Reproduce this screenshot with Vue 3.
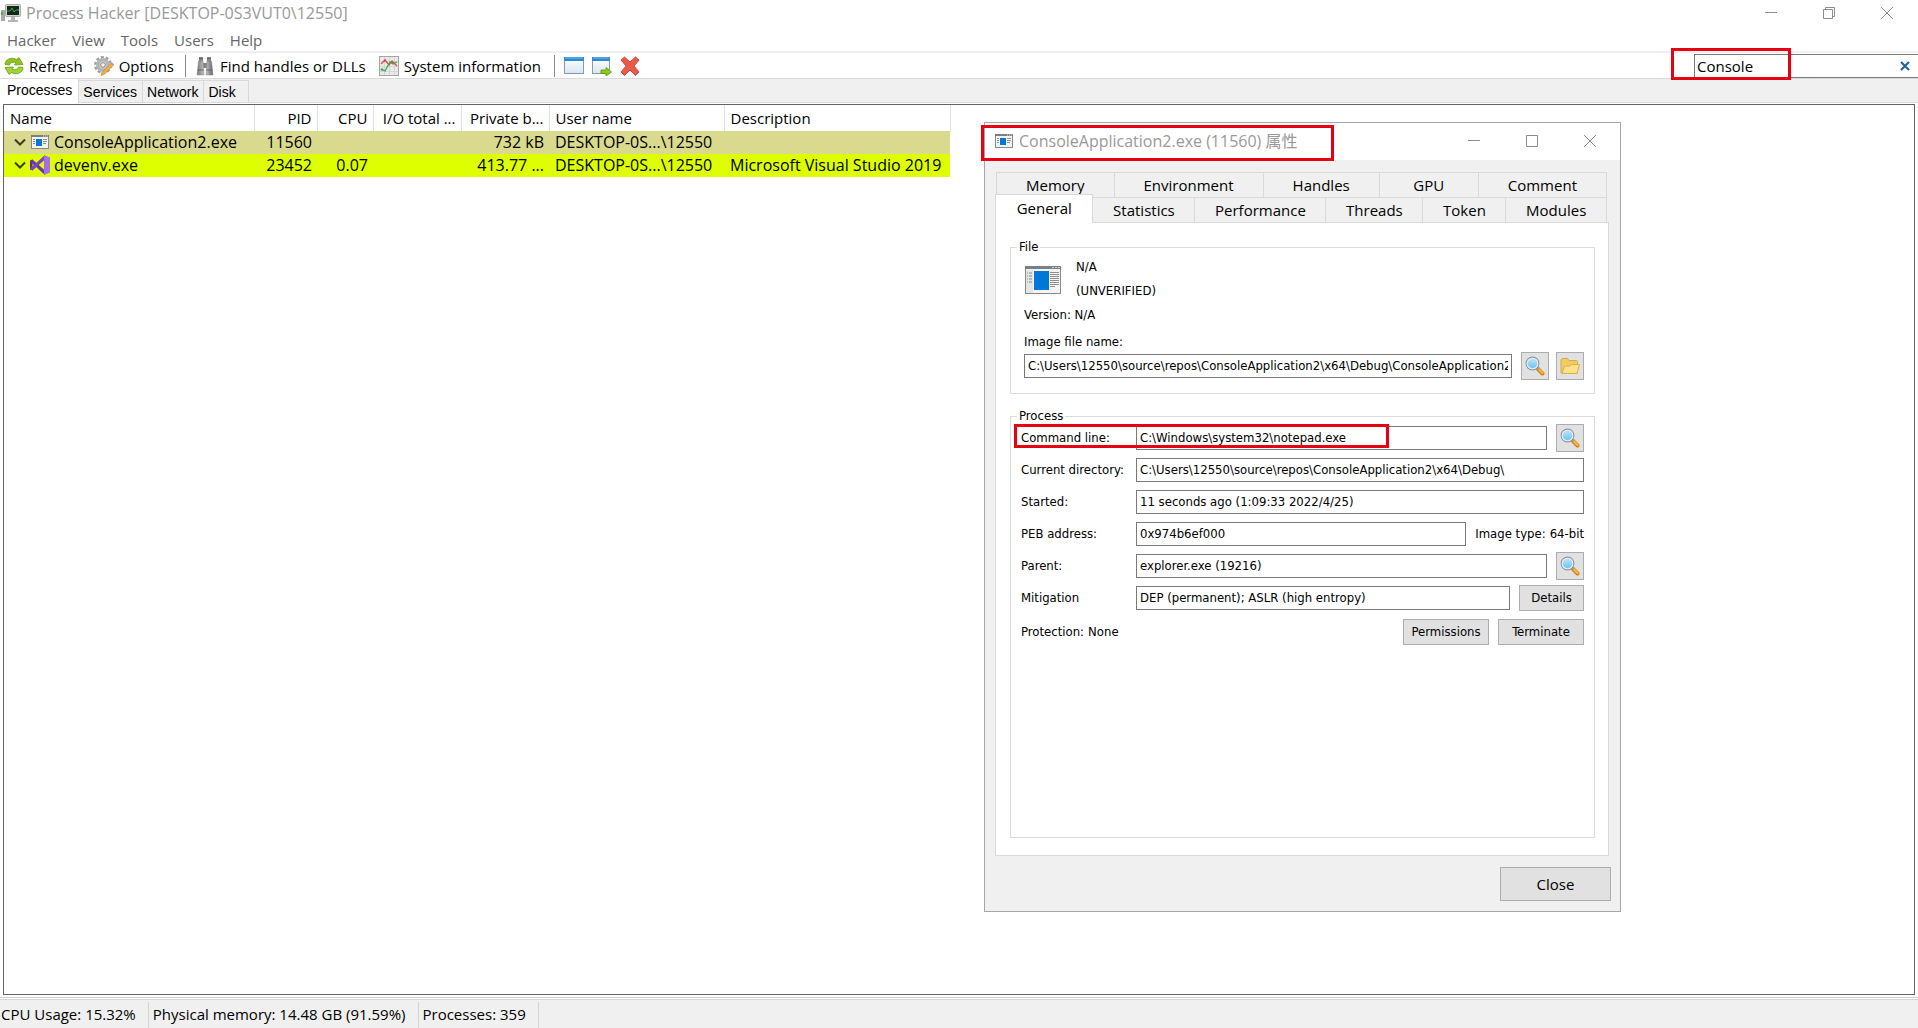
<script setup>
import { ref } from 'vue'

const menus = ['Hacker', 'View', 'Tools', 'Users', 'Help']
const mainTabs = ['Processes', 'Services', 'Network', 'Disk']
const filter = ref('Console')

const columns = [
  { key: 'name', label: 'Name' },
  { key: 'pid', label: 'PID', right: true },
  { key: 'cpu', label: 'CPU', right: true },
  { key: 'io', label: 'I/O total ...', right: true },
  { key: 'priv', label: 'Private b...', right: true },
  { key: 'user', label: 'User name' },
  { key: 'desc', label: 'Description' }
]

const processes = [
  { name: 'ConsoleApplication2.exe', icon: 'console', tone: 'selected', pid: '11560', cpu: '', io: '', priv: '732 kB', user: 'DESKTOP-0S...\\12550', desc: '' },
  { name: 'devenv.exe', icon: 'vs', tone: 'own', pid: '23452', cpu: '0.07', io: '', priv: '413.77 ...', user: 'DESKTOP-0S...\\12550', desc: 'Microsoft Visual Studio 2019' }
]

const status = ['CPU Usage: 15.32%', 'Physical memory: 14.48 GB (91.59%)', 'Processes: 359']

const backTabs = ['Memory', 'Environment', 'Handles', 'GPU', 'Comment']
const frontTabs = ['General', 'Statistics', 'Performance', 'Threads', 'Token', 'Modules']

const imageFile = ref('C:\\Users\\12550\\source\\repos\\ConsoleApplication2\\x64\\Debug\\ConsoleApplication2.exe')
const commandLine = ref('C:\\Windows\\system32\\notepad.exe')
const currentDir = ref('C:\\Users\\12550\\source\\repos\\ConsoleApplication2\\x64\\Debug\\')
const started = ref('11 seconds ago (1:09:33 2022/4/25)')
const peb = ref('0x974b6ef000')
const parent = ref('explorer.exe (19216)')
const mitigation = ref('DEP (permanent); ASLR (high entropy)')
</script>

<template>
  <div class="window">
    <!-- Shared icon shapes -->
    <svg class="defs" aria-hidden="true">
      <defs>
        <linearGradient id="lens" x1="0" y1="0" x2="0" y2="1">
          <stop offset="0" stop-color="#c4eafc" /><stop offset="1" stop-color="#62bdf0" />
        </linearGradient>
        <linearGradient id="pane" x1="0" y1="0" x2="0" y2="1">
          <stop offset="0" stop-color="#ffffff" /><stop offset="1" stop-color="#dbe5f0" />
        </linearGradient>
        <linearGradient id="metal" x1="0" y1="0" x2="1" y2="0">
          <stop offset="0" stop-color="#777" /><stop offset=".5" stop-color="#ccc" /><stop offset="1" stop-color="#666" />
        </linearGradient>
        <symbol id="i-console" viewBox="0 0 36 28">
          <rect x=".5" y=".5" width="35" height="27" fill="#f4f4f4" stroke="#85888c" />
          <path d="M0 0h36v3H0z" fill="#7c8084" />
          <path d="M1 4h7v23H1z" fill="#e6e6e6" />
          <path d="M27 1.5h2M30 1.5h2M33 1.5h2" stroke="#d5d5d5" />
          <path d="M2 7h1M4 7h3M2 10h1M4 10h3M2 13h1M4 13h3M2 16h1M4 16h3" stroke="#8a8a8a" />
          <path d="M9 5h15v19H9z" fill="#0078d7" />
          <path d="M25 6.500h9M25 8.500h9M25 10.500h9M25 12.500h9M25 14.500h9M25 16.500h9M25 18.500h9M25 20.500h5" stroke="#8f8f8f" />
        </symbol>
        <symbol id="i-console-small" viewBox="0 0 18 14">
          <rect x=".5" y=".5" width="17" height="13" fill="#f4f4f4" stroke="#85888c" />
          <path d="M0 0h18v2H0z" fill="#7c8084" />
          <path d="M12 1h1M14 1h1M16 1h1" stroke="#ddd" />
          <path d="M2 4.500h2M2 6.500h2M2 8.500h2M12 4.500h4M12 6.500h4M12 8.500h3" stroke="#8f8f8f" />
          <path d="M5 4h6v7H5z" fill="#0078d7" />
        </symbol>
        <symbol id="i-vs" viewBox="0 0 20 20">
          <path d="M0 5.500 2.500 4.500v11L0 14.500z" fill="#5b2d91" />
          <path d="M2.500 4.500 15 15.500V20L0 6.500z" fill="#6a35a8" />
          <path d="M2.500 15.500 15 4.500V0L0 13.500z" fill="#7c43bd" />
          <path d="M14 0l6 2.600v14.800L14 20z" fill="#a56fea" />
        </symbol>
        <symbol id="i-search" viewBox="0 0 20 20">
          <path d="M12.500 12.500l5 5" stroke="#d87d12" stroke-width="4" stroke-linecap="round" />
          <path d="M13 12.500l4.500 4.500" stroke="#fcb93a" stroke-width="2.200" stroke-linecap="round" />
          <path d="M11 11l2.500 2.500" stroke="#999" stroke-width="2" />
          <circle cx="7.500" cy="7.500" r="6.300" fill="url(#lens)" stroke="#8b96a0" stroke-width="1.200" />
          <circle cx="7.500" cy="7.500" r="5.300" fill="none" stroke="#e6edf2" stroke-width="1.100" />
        </symbol>
      </defs>
    </svg>

    <header class="titlebar">
      <svg class="app-icon" viewBox="0 0 20 18">
        <path d="M0 6h4v11H0z" fill="#a9a9a9" /><path d="M1 8v3" stroke="#35b535" stroke-width="1.500" />
        <rect x="4.500" y=".5" width="15" height="12" rx="1" fill="#d2d2d2" stroke="#aaa" />
        <path d="M6 2h12v9H6z" fill="#17261b" />
        <path d="M6 7h3l2-3 2 4 2-2h3" fill="none" stroke="#35a943" />
        <path d="M10 13h4v3h-4zM7 16h10v2H7z" fill="#b6b6b6" />
      </svg>
      <h1>Process Hacker [DESKTOP-0S3VUT0\12550]</h1>
      <div class="controls">
        <button aria-label="Minimize"><svg viewBox="0 0 12 12"><path d="M0 5.500h12" /></svg></button>
        <button aria-label="Restore"><svg viewBox="0 0 12 12"><path d="M.5 2.500h9v9h-9zM2.500 2.500v-2h9v9h-2" /></svg></button>
        <button aria-label="Close"><svg viewBox="0 0 12 12"><path d="M0 0l12 12M12 0L0 12" /></svg></button>
      </div>
    </header>

    <nav class="menubar">
      <a v-for="m in menus" :key="m" href="#">{{ m }}</a>
    </nav>

    <div class="toolbar">
      <button class="tool">
        <svg viewBox="0 0 20 20">
          <path d="M1 8.500C1 3 8 .5 12.500 3.500L15 1.500l4 7-8.500.5L12 7C9 5.500 6.500 6.500 5.500 9z" fill="#8fc31f" stroke="#6a9a12" stroke-width=".8" />
          <path d="M19 11.500c0 5.500-7 8-11.500 5L5 18.500l-4-7 8.500-.5L8 13c3 1.500 5.500.5 6.500-2z" fill="#a3d335" stroke="#6a9a12" stroke-width=".8" />
        </svg>
        <span>Refresh</span>
      </button>
      <button class="tool">
        <svg viewBox="0 0 20 20">
          <circle cx="9" cy="9" r="7.700" fill="none" stroke="#a2a2a2" stroke-width="2.600" stroke-dasharray="3 1.840" />
          <circle cx="9" cy="9" r="5.200" fill="#d6d6d6" stroke="#b4b4b4" stroke-width="3.400" />
          <circle cx="9" cy="9" r="2.300" fill="#f5f5f5" stroke="#888" />
          <path d="M17 7.500l2 2-9 9-3 1 1-3z" fill="#f7b040" stroke="#c98420" stroke-width=".7" />
          <path d="M17 7.500l1-1 2 2-1 1z" fill="#c77ba8" />
        </svg>
        <span>Options</span>
      </button>
      <i class="rule"></i>
      <button class="tool wide">
        <svg viewBox="0 0 20 20">
          <path d="M4 1h4v5H4zM12 1h4v5h-4zM8 7h4v5H8z" fill="#858585" />
          <path d="M3.500 5H8l1 14H2zM12 5h4.500L18 19h-7z" fill="url(#metal)" stroke="#888" stroke-width=".5" />
          <path d="M2.500 14h6M11.500 14h6M4 2.500h4M12 2.500h4" stroke="#666" />
        </svg>
        <span>Find handles or DLLs</span>
      </button>
      <button class="tool wide">
        <svg viewBox="0 0 20 20">
          <rect x=".5" y=".5" width="19" height="19" fill="#eaeaea" stroke="#a5a5a5" />
          <path d="M1 5.500h18M1 10.500h18M1 15.500h18M5.500 1v18M10.500 1v18M15.500 1v18" stroke="#cfcfcf" stroke-width=".7" />
          <path d="M2 8l4-4 4 5 3-4 5 5" fill="none" stroke="#dd4b4b" stroke-width="1.300" />
          <path d="M3 13.500l3 1.500 5-9 3 2 4-2" fill="none" stroke="#3fa648" stroke-width="1.300" />
          <circle cx="3" cy="13.500" r="1.300" fill="#3fa648" /><circle cx="6" cy="4.500" r="1.200" fill="#dd4b4b" />
        </svg>
        <span>System information</span>
      </button>
      <i class="rule"></i>
      <div class="icon-tools">
        <button class="tool" aria-label="Find window">
          <svg viewBox="0 0 20 20">
            <rect x=".5" y="1.500" width="19" height="16" fill="url(#pane)" stroke="#7e9dba" />
            <path d="M0 1h20v4H0z" fill="#2c8bd0" /><path d="M1 2h18" stroke="#6dbbeb" />
          </svg>
        </button>
        <button class="tool" aria-label="Find window and thread">
          <svg viewBox="0 0 20 20">
            <rect x=".5" y="1.500" width="17" height="16" fill="url(#pane)" stroke="#7e9dba" />
            <path d="M0 1h18v4H0z" fill="#2c8bd0" /><path d="M1 2h16" stroke="#6dbbeb" />
            <path d="M9 14h5v-2.500l5.500 4.500-5.500 4v-2.500H9z" fill="#8ecb1c" stroke="#5d9110" stroke-width=".8" />
          </svg>
        </button>
        <button class="tool" aria-label="Find window and kill">
          <svg viewBox="0 0 20 20">
            <path d="M1 4l3.500-3L10 6l5.500-5L19 4l-5 6 5 6-3.500 3.500L10 14l-5.500 5.500L1 16l5-6z" fill="#ec5a47" stroke="#c9493a" />
          </svg>
        </button>
      </div>
      <div class="search">
        <input v-model="filter" type="text" aria-label="Search processes" />
        <button aria-label="Clear search">
          <svg viewBox="0 0 10 10"><path d="M1 1l8 8M9 1L1 9" /></svg>
        </button>
        <i class="mark mark-search"></i>
      </div>
    </div>

    <div class="tabs" role="tablist">
      <button v-for="(t, i) in mainTabs" :key="t" role="tab" :class="{ active: i === 0 }">{{ t }}</button>
    </div>

    <main class="page">
      <div class="list">
        <table>
          <colgroup>
            <col v-for="c in columns" :key="c.key" :class="'col-' + c.key" />
          </colgroup>
          <thead>
            <tr>
              <th v-for="c in columns" :key="c.key" :class="{ right: c.right }">{{ c.label }}</th>
            </tr>
          </thead>
          <tbody>
            <tr v-for="p in processes" :key="p.pid" :class="p.tone">
              <td>
                <div class="name">
                  <svg class="chevron" viewBox="0 0 12 8"><path d="M1 1.500l5 5 5-5" /></svg>
                  <svg v-if="p.icon === 'console'" class="proc"><use href="#i-console-small" /></svg>
                  <svg v-else class="proc vs"><use href="#i-vs" /></svg>
                  <span>{{ p.name }}</span>
                </div>
              </td>
              <td v-for="c in columns.slice(1)" :key="c.key" :class="{ right: c.right }">{{ p[c.key] }}</td>
            </tr>
          </tbody>
        </table>
      </div>
    </main>

    <footer class="status">
      <span v-for="s in status" :key="s">{{ s }}</span>
    </footer>

    <section class="dialog" role="dialog" aria-labelledby="dlg-title">
      <div class="dlg-title">
        <svg class="proc"><use href="#i-console-small" /></svg>
        <h2 id="dlg-title">ConsoleApplication2.exe (11560) 属性</h2>
        <div class="controls">
          <button aria-label="Minimize"><svg viewBox="0 0 12 12"><path d="M0 5.500h12" /></svg></button>
          <button aria-label="Maximize"><svg viewBox="0 0 12 12"><path d="M.5 .5h11v11H.5z" /></svg></button>
          <button aria-label="Close"><svg viewBox="0 0 12 12"><path d="M0 0l12 12M12 0L0 12" /></svg></button>
        </div>
        <i class="mark mark-title"></i>
      </div>

      <div class="dlg-body">
        <div class="dlg-tabs" role="tablist">
          <button v-for="t in backTabs" :key="t" role="tab">{{ t }}</button>
        </div>
        <div class="dlg-tabs front" role="tablist">
          <button v-for="(t, i) in frontTabs" :key="t" role="tab" :class="{ active: i === 0 }">{{ t }}</button>
        </div>

        <div class="dlg-page">
          <fieldset class="file">
            <legend>File</legend>
            <div class="file-info">
              <svg class="file-icon"><use href="#i-console" /></svg>
              <div>
                <p>N/A</p>
                <p>(UNVERIFIED)</p>
              </div>
            </div>
            <p>Version: N/A</p>
            <label class="above" for="f-image">Image file name:</label>
            <div class="line">
              <input id="f-image" v-model="imageFile" type="text" readonly />
              <button class="square" aria-label="Inspect image"><svg><use href="#i-search" /></svg></button>
              <button class="square" aria-label="Open folder">
                <svg viewBox="0 0 20 20">
                  <path d="M1 17V3.500L2.500 2.500h5l1.500 2h7.500l1 1V17z" fill="#f3cb62" stroke="#d8a944" />
                  <path d="M2 17.500l2.500-7.500H10l1.500-1.500h8L17 17.500z" fill="#fde08a" stroke="#dcb04c" />
                </svg>
              </button>
            </div>
          </fieldset>

          <fieldset class="process">
            <legend>Process</legend>
            <div class="line">
              <label for="f-cmd">Command line:</label>
              <input id="f-cmd" v-model="commandLine" type="text" readonly />
              <button class="square" aria-label="Inspect command line"><svg><use href="#i-search" /></svg></button>
              <i class="mark mark-command"></i>
            </div>
            <div class="line">
              <label for="f-dir">Current directory:</label>
              <input id="f-dir" v-model="currentDir" type="text" readonly />
            </div>
            <div class="line">
              <label for="f-start">Started:</label>
              <input id="f-start" v-model="started" type="text" readonly />
            </div>
            <div class="line">
              <label for="f-peb">PEB address:</label>
              <input id="f-peb" v-model="peb" type="text" readonly />
              <span class="image-type"><span>Image type:</span><span>64-bit</span></span>
            </div>
            <div class="line">
              <label for="f-parent">Parent:</label>
              <input id="f-parent" v-model="parent" type="text" readonly />
              <button class="square" aria-label="Inspect parent"><svg><use href="#i-search" /></svg></button>
            </div>
            <div class="line">
              <label for="f-mit">Mitigation</label>
              <input id="f-mit" v-model="mitigation" type="text" readonly />
              <button class="push details">Details</button>
            </div>
            <div class="line last">
              <span class="protection"><span>Protection:</span><span>None</span></span>
              <button class="push">Permissions</button>
              <button class="push">Terminate</button>
            </div>
          </fieldset>
        </div>
      </div>

      <div class="dlg-footer">
        <button class="close">Close</button>
      </div>
    </section>
  </div>
</template>

<style>
body {
  margin: 0;
  background: #fff;
}
</style>

<style scoped>
* {
  box-sizing: border-box;
}

.window {
  position: relative;
  display: flex;
  flex-direction: column;
  min-height: 100vh;
  overflow: hidden;
  background: #fff;
  color: #000;
  font: 15px/20px "Open Sans", "Noto Sans CJK SC", sans-serif;
  white-space: nowrap;
}

.defs {
  position: absolute;
  width: 0;
  height: 0;
}

button {
  margin: 0;
  padding: 0;
  border: 0;
  border-radius: 0;
  background: none;
  color: inherit;
  font: inherit;
}

svg {
  display: block;
  flex: none;
}

h1,
h2,
p {
  margin: 0;
  font-weight: 400;
}

/* Red highlight frames drawn over the controls */
.mark {
  position: absolute;
  border: 3px solid #e60012;
  pointer-events: none;
}

/* Title bar and menu */
.titlebar {
  display: flex;
  align-items: center;
  height: 27px;
  padding: 0 2px 1px 0;
}

.app-icon {
  width: 20px;
  height: 18px;
  margin: 0 5px 0 1px;
}

h1,
h2 {
  flex: 1;
  color: #999;
  font-size: 16px;
  line-height: 20px;
}

.controls {
  display: flex;
  height: 26px;
}

.controls button {
  display: flex;
  align-items: center;
  justify-content: center;
  width: 58px;
}

.controls svg {
  width: 12px;
  height: 12px;
  fill: none;
  stroke: #8c8c8c;
}

.menubar {
  display: flex;
  gap: 16px;
  height: 26px;
  padding: 3px 7px 0;
  border-bottom: 2px solid #f0f0f0;
}

.menubar a {
  color: #666;
  text-decoration: none;
}

/* Toolbar */
.toolbar {
  display: flex;
  align-items: center;
  height: 26px;
  padding-left: 4px;
  border-bottom: 1px solid #dadada;
}

.tool {
  display: flex;
  align-items: center;
  gap: 5px;
  margin-right: 11px;
}

.tool.wide {
  margin-right: 13px;
}

.tool svg {
  width: 20px;
  height: 20px;
}

.rule {
  width: 1px;
  height: 22px;
  margin-right: 9px;
  background: #8a8a8a;
}

.icon-tools {
  display: flex;
}

.icon-tools .tool {
  margin-right: 8px;
}

.search {
  position: relative;
  display: flex;
  align-items: center;
  width: 224px;
  height: 24px;
  margin-left: auto;
  border: 1px solid #7a7a7a;
  border-right: 0;
}

.search input {
  flex: 1;
  min-width: 0;
  height: 22px;
  padding: 0 2px;
  border: 0;
  outline: 0;
  background: none;
  font: inherit;
}

.search button {
  margin-right: 8px;
}

.search button svg {
  width: 10px;
  height: 10px;
  fill: none;
  stroke: #2a6099;
  stroke-width: 2.2;
}

.mark-search {
  top: -7px;
  left: -24px;
  width: 120px;
  height: 32px;
}

/* Main tab strip */
.tabs {
  display: flex;
  align-items: flex-end;
  height: 24px;
  background: #f0f0f0;
  border-bottom: 1px solid #d9d9d9;
  font: 14px/20px "Liberation Sans", Arial, sans-serif;
}

.tabs button {
  height: 22px;
  padding: 0 5px 0 4px;
  border: 1px solid #d9d9d9;
  border-width: 1px 1px 0 0;
}

.tabs button:last-child {
  padding-right: 12px;
}

.tabs .active {
  height: 24px;
  margin-bottom: -1px;
  padding: 0 6px 3px 7px;
  border-top: 0;
  background: #fff;
}

/* Process list */
.page {
  display: flex;
  flex: 1;
  padding: 1px 3px 2px;
  border-bottom: 1px solid #d0d0d0;
}

.list {
  flex: 1;
  border: 1px solid #646464;
}

table {
  width: 946px;
  border-collapse: collapse;
  table-layout: fixed;
  font-size: 16px;
  line-height: 20px;
}

.col-name { width: 250px; }
.col-pid { width: 63px; }
.col-cpu { width: 56px; }
.col-io,
.col-priv { width: 88px; }
.col-user { width: 175px; }
.col-desc { width: 226px; }

th,
td {
  height: 23px;
  padding: 0 6px;
  overflow: hidden;
  text-align: left;
}

td {
  padding-bottom: 2px;
}

th {
  height: 26px;
  border-right: 1px solid #e0e0e0;
  font-size: 15px;
  font-weight: 400;
}

.right {
  padding-right: 5px;
  text-align: right;
}

.selected {
  background: #dada8f;
}

.own {
  background: #ddff00;
}

.name {
  display: flex;
  align-items: center;
  gap: 5px;
  padding-left: 4px;
}

.chevron {
  width: 12px;
  height: 8px;
  fill: none;
  stroke: #3c3c1e;
  stroke-width: 2;
}

.proc {
  width: 18px;
  height: 14px;
}

.vs {
  width: 20px;
  height: 20px;
  margin: 0 -1px;
}

/* Status bar */
.status {
  display: flex;
  height: 30px;
  padding-top: 3px;
  border-top: 1px solid #fff;
  background: #f0f0f0;
  box-shadow: inset 0 1px #d4d4d4;
}

.status span {
  padding: 2px 12px 0 4px;
  border-right: 1px solid #d4d4d4;
}

.status span:first-child {
  padding-left: 1px;
}

/* Properties window */
.dialog {
  position: absolute;
  top: 122px;
  left: 984px;
  width: 637px;
  border: 1px solid #a6a6a6;
  background: #f0f0f0;
}

.dlg-title {
  position: relative;
  display: flex;
  align-items: center;
  height: 37px;
  padding: 0 1px 2px 10px;
  background: #fff;
}

.dlg-title .proc {
  margin-right: 6px;
}

.mark-title {
  top: 2px;
  left: -4px;
  width: 353px;
  height: 36px;
}

.dlg-body {
  padding: 12px 11px 0 10px;
}

.dlg-tabs {
  display: flex;
  height: 25px;
  margin: 0 2px 0 1px;
  border-left: 1px solid #d9d9d9;
}

.dlg-tabs button {
  flex: 1 1 auto;
  min-width: 99px;
  border: 1px solid #d9d9d9;
  border-width: 1px 1px 0 0;
}

.front button {
  min-width: 0;
}

.dlg-tabs .active {
  z-index: 1;
  margin: -3px 0 -1px -2px;
  padding: 0 1px 3px;
  border-left-width: 1px;
  background: #fff;
}

.dlg-page {
  padding: 16px 13px 17px 14px;
  border: 1px solid #d9d9d9;
  background: #fff;
  font: 13px/24px "DejaVu Sans Condensed", "DejaVu Sans", sans-serif;
}

fieldset {
  min-width: 0;
  margin: 0;
  padding: 0 10px 13px;
  border: 1px solid #dcdcdc;
}

legend {
  margin-left: -4px;
  padding: 0 2px;
  line-height: 16px;
}

.file {
  padding-left: 13px;
}

.file legend {
  margin-left: -7px;
}

.file-info {
  display: flex;
  gap: 15px;
}

.file-icon {
  width: 36px;
  height: 28px;
  margin: 11px 0 0 1px;
}

.above {
  display: block;
  margin-top: 5px;
  line-height: 20px;
}

.line {
  position: relative;
  display: flex;
  align-items: center;
  height: 28px;
}

.line label {
  width: 115px;
}

.line input {
  flex: 1;
  min-width: 0;
  height: 24px;
  padding: 0 3px;
  border: 1px solid #7a7a7a;
  outline: 0;
  background: #fff;
  color: #000;
  font: inherit;
}

.square,
.push,
.close {
  border: 1px solid #adadad;
  background: #e1e1e1;
}

.square {
  display: flex;
  align-items: center;
  justify-content: center;
  width: 28px;
  height: 28px;
  margin-left: 9px;
}

.file .square + .square {
  margin-left: 7px;
}

.square svg {
  width: 20px;
  height: 20px;
}

.push {
  width: 86px;
  height: 26px;
  margin-left: 9px;
}

.details {
  width: 65px;
}

.process {
  min-height: 430px;
  margin-top: 14px;
}

.process .line + .line {
  margin-top: 4px;
}

.process .last {
  height: 30px;
  padding-top: 2px;
}

.image-type,
.protection {
  display: flex;
  gap: 4px;
}

.image-type {
  margin-left: 9px;
}

.protection {
  flex: 1;
}

.mark-command {
  top: 0;
  left: -7px;
  width: 375px;
  height: 24px;
}

.dlg-footer {
  display: flex;
  justify-content: flex-end;
  padding: 11px 9px 10px;
}

.close {
  width: 111px;
  height: 34px;
}
</style>
